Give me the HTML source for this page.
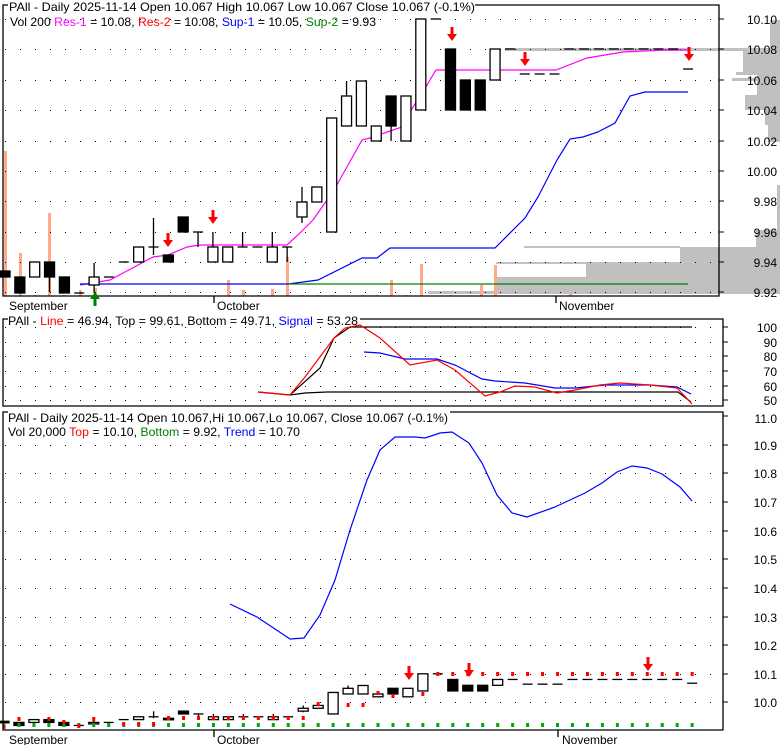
<!DOCTYPE html>
<html><head><meta charset="utf-8"><style>
html,body{margin:0;padding:0;background:#fff;}
svg{display:block;font-family:"Liberation Sans",Arial,sans-serif;}
</style></head><body>
<svg id="s" width="780" height="745" viewBox="0 0 780 745" xmlns="http://www.w3.org/2000/svg">
<rect width="780" height="745" fill="#fff"/>
<g id="prof" fill="#c0c0c0">
<rect x="770" y="20" width="10" height="30"/>
<rect x="505" y="48" width="275" height="3"/>
<rect x="743" y="51" width="37" height="22"/>
<rect x="736" y="72" width="44" height="3"/>
<rect x="732" y="78" width="48" height="3"/>
<rect x="757" y="75" width="23" height="20"/>
<rect x="745" y="95" width="35" height="15"/>
<rect x="765" y="110" width="15" height="15"/>
<rect x="768" y="125" width="12" height="17"/>
<rect x="777" y="185" width="3" height="48"/>
<rect x="756" y="230" width="24" height="17"/>
<rect x="680" y="247" width="100" height="47"/>
<rect x="524" y="246" width="156" height="2"/>
<rect x="586" y="262" width="94" height="32"/>
<rect x="496" y="262" width="90" height="2"/>
<rect x="496" y="277" width="90" height="17"/>
<rect x="428" y="291" width="68" height="3"/>
</g>
<g id="vol" fill="#ffab8a"></g>
<g id="grid" stroke="#000" stroke-dasharray="1 14" stroke-width="1"></g>
<g id="lines" fill="none" stroke-width="1.2">
<polyline stroke="#ff00ff" points="80,285 110,280 153,257 168,255 187,247 200,245 287,245 300,233 313,220 325,203 338,183 362,140 370,138 390,131 402,127 413,107 427,85 436,70 556,70 587,58 623,52 667,50 688,50"/>
<polyline stroke="#0000ff" points="80,284 288,284 318,280 362,258 377,258 390,248 495,248 525,218 538,197 557,160 570,139 583,137 598,132 615,123 630,96 645,92 688,92"/>
<polyline stroke="#008000" points="288,284 688,284"/>
<polyline stroke="#000" points="258,392 290,395 305,393 327,392 678,392 691,402"/>
<polyline stroke="#000" points="290,395 320,368 334,338 350,327 360,327 692,327"/>
<polyline stroke="#0000ff" points="364,352 380,353 405,359 437,359 455,365 482,379 495,381 525,383 555,388 575,388 605,385 650,385 677,387 691,394"/>
<polyline stroke="#ff0000" points="258,392 290,395 305,377 334,338 345,328 360,325 380,338 410,365 437,360 455,370 485,396 500,392 515,386 535,387 557,393 575,390 600,385 620,383 650,385 677,388 692,404"/>
<polyline stroke="#0000ff" points="230,604 257,617 290,639 304,638 320,615 335,580 350,530 367,480 380,450 395,437 415,437 425,438 440,433 452,432 469,443 482,463 497,495 512,513 527,517 555,507 585,493 602,483 617,472 632,466 647,468 662,474 680,487 692,501"/>
</g>
<g id="cand" stroke="#000" stroke-width="1.3"></g>
<g id="dots"></g>
<g id="frames" fill="none" stroke="#000" stroke-width="1.3">
<polyline points="8,5 3,5 3,296 719,296 719,5 475,5"/>
<polyline points="8,319 3,319 3,406 723,406 723,319 360,319"/>
<polyline points="8,412 3,412 3,730 723,730 723,412 450,412"/>
<line x1="214" y1="296" x2="214" y2="303"/><line x1="556" y1="296" x2="556" y2="303"/>
<line x1="214" y1="730" x2="214" y2="737"/><line x1="558" y1="730" x2="558" y2="737"/>
</g>
<g id="ticks" stroke="#000"></g>
<g id="arrows"></g>
<g font-size="12" fill="#000">
<text x="9" y="11" textLength="466" lengthAdjust="spacingAndGlyphs">PAll - Daily 2025-11-14 Open 10.067  High 10.067  Low 10.067  Close 10.067 (-0.1%)</text>
<text x="10" y="26" textLength="366" lengthAdjust="spacingAndGlyphs">Vol 200 <tspan fill="#ff00ff">Res-1</tspan> = 10.08, <tspan fill="#ff0000">Res-2</tspan> = 10.08, <tspan fill="#0000ff">Sup-1</tspan> = 10.05, <tspan fill="#008000">Sup-2</tspan> = 9.93</text>
<text x="9" y="310">September</text><text x="217" y="310">October</text><text x="559" y="310">November</text>
<text x="8" y="325" textLength="350" lengthAdjust="spacingAndGlyphs">PAll - <tspan fill="#ff0000">Line</tspan> = 46.94, Top = 99.61, Bottom = 49.71, <tspan fill="#0000ff">Signal</tspan> = 53.28</text>
<text x="8" y="422" textLength="440" lengthAdjust="spacingAndGlyphs">PAll - Daily 2025-11-14 Open 10.067,Hi 10.067,Lo 10.067, Close 10.067 (-0.1%)</text>
<text x="8" y="436" textLength="292" lengthAdjust="spacingAndGlyphs">Vol 20,000 <tspan fill="#ff0000">Top</tspan> = 10.10, <tspan fill="#008000">Bottom</tspan> = 9.92, <tspan fill="#0000ff">Trend</tspan> = 10.70</text>
<text x="9" y="744">September</text><text x="217" y="744">October</text><text x="562" y="744">November</text>
</g>
<g id="labels" font-size="12" fill="#000" text-anchor="end"></g>
</svg>
<script>
var NS="http://www.w3.org/2000/svg";
function el(p,t,a){var e=document.createElementNS(NS,t);for(var k in a)e.setAttribute(k,a[k]);document.getElementById(p).appendChild(e);return e;}
// grids
[19,49,80,110,141,171,201,232,262,292].forEach(function(y){el('grid','line',{x1:5,y1:y+.5,x2:719,y2:y+.5});el('ticks','line',{x1:719,y1:y,x2:724,y2:y});});
[327,342,356,371,386,400].forEach(function(y){el('grid','line',{x1:5,y1:y+.5,x2:723,y2:y+.5});el('ticks','line',{x1:723,y1:y,x2:728,y2:y});});
[445,473,502,531,559,588,617,645,674,702].forEach(function(y){el('grid','line',{x1:5,y1:y+.5,x2:723,y2:y+.5});el('ticks','line',{x1:723,y1:y,x2:728,y2:y});});
el('ticks','line',{x1:723,y1:416,x2:728,y2:416});
var L=[["10.10",19],["10.08",49],["10.06",80],["10.04",110],["10.02",141],["10.00",171],["9.98",201],["9.96",232],["9.94",262],["9.92",292],
["100",327],["90",342],["80",356],["70",371],["60",386],["50",400],
["11.0",418],["10.9",445],["10.8",473],["10.7",502],["10.6",531],["10.5",559],["10.4",588],["10.3",617],["10.2",645],["10.1",674],["10.0",702]];
L.forEach(function(l){var t=el('labels','text',{x:777,y:l[1]+5});t.textContent=l[0];});
// volume
[[5,151],[20,253],[35,295],[49,213],[64,295],[80,290],[95,288],[154,295],[168,295],[228,280],[243,290],[258,295],[272,289],[287,257],[302,295],[317,295],[332,295],[362,295],[376,295],[391,280],[406,295],[421,264],[451,295],[481,285],[495,265],[570,293]].forEach(function(v){el('vol','rect',{x:v[0]-1,y:v[1],width:3,height:296-v[1]});});
// candles: type, top, bottom, wickTop, wickBot
var C=[["b",271,277],["b",277,293],["w",262,277],["b",262,277,262,292],["b",277,293],["d",293],["w",277,285,263,293],["d",277],["d",262],["w",247,262],
["d",247,0,218,255],["b",255,262],["b",217,232],["d",232,0,232,247],["w",247,262,232,262],["w",247,262],["d",247,0,232,247],["d",247],["w",247,262,232,262],["d",247,0,247,262],
["w",202,217,187,223],["w",187,202],["w",118,232],["w",96,126,81,126],["w",81,126],["w",126,141],["b",96,126,96,141],["w",96,141],["w",19,110],["d",19],
["b",49,110],["b",80,110],["b",80,110],["w",49,80],["d",49],["d",74],["d",74],["d",74],["d",49],["d",49],["d",49],["d",49],["d",49],["d",49],["d",49],["d",49],["d",69]];
function draw(x,c,f,hw){
 var t=f(c[1]);
 if(c.length>3){el('cand','line',{x1:x,y1:f(c[3]),x2:x,y2:f(c[4])});}
 if(c[0]=="d"){el('cand','line',{x1:x-hw,y1:t,x2:x+hw,y2:t});}
 else{var b=f(c[2]);el('cand','rect',{x:x-hw,y:t,width:hw*2,height:Math.max(b-t,1.5),fill:c[0]=="b"?"#000":"#fff"});}
}
C.forEach(function(c,i){
 draw(5+14.85*i,c,function(y){return y;},5);
 draw(4+14.96*i,c,function(y){return 673.8+(y-19)*0.1885;},5);
});
// bottom panel dots
for(var i=0;i<47;i++){var x=4+14.96*i;el('dots','rect',{x:x-1.5,y:723,width:3,height:4,fill:"#00aa00"});}
var R=[[0,727],[1,719],[3,719],[4,722],[5,726],[6,719],[8,724],[9,724],[10,724],[11,718],[12,718],[13,718],[14,718],[15,718],[16,718],[17,718],[18,718],[19,718],[20,718],[21,704],[23,705],[24,705],[25,693],[26,696],[28,694],[29,674]];
R.forEach(function(r){el('dots','rect',{x:4+14.96*r[0]-1.5,y:r[1]-2,width:3,height:4,fill:"#ff0000"});});
for(var i=30;i<47;i++){el('dots','rect',{x:4+14.96*i-1.5,y:672,width:3,height:4,fill:"#ff0000"});}
// arrows
function arr(x,y,up,col){
 if(!up){el('arrows','rect',{x:x-1.5,y:y,width:3,height:8,fill:col});el('arrows','polygon',{points:(x-5)+","+(y+7)+" "+(x+5)+","+(y+7)+" "+x+","+(y+14),fill:col});}
 else{el('arrows','polygon',{points:(x-5)+","+(y+7)+" "+(x+5)+","+(y+7)+" "+x+","+y,fill:col});el('arrows','rect',{x:x-1.5,y:y+6,width:3,height:8,fill:col});}
}
arr(168,233,false,"#ff0000");arr(213,210,false,"#ff0000");arr(452,27,false,"#ff0000");arr(525,52,false,"#ff0000");arr(689,47,false,"#ff0000");
arr(95,292,true,"#008000");
arr(409,666,false,"#ff0000");arr(469,663,false,"#ff0000");arr(648,657,false,"#ff0000");
</script>
</body></html>
